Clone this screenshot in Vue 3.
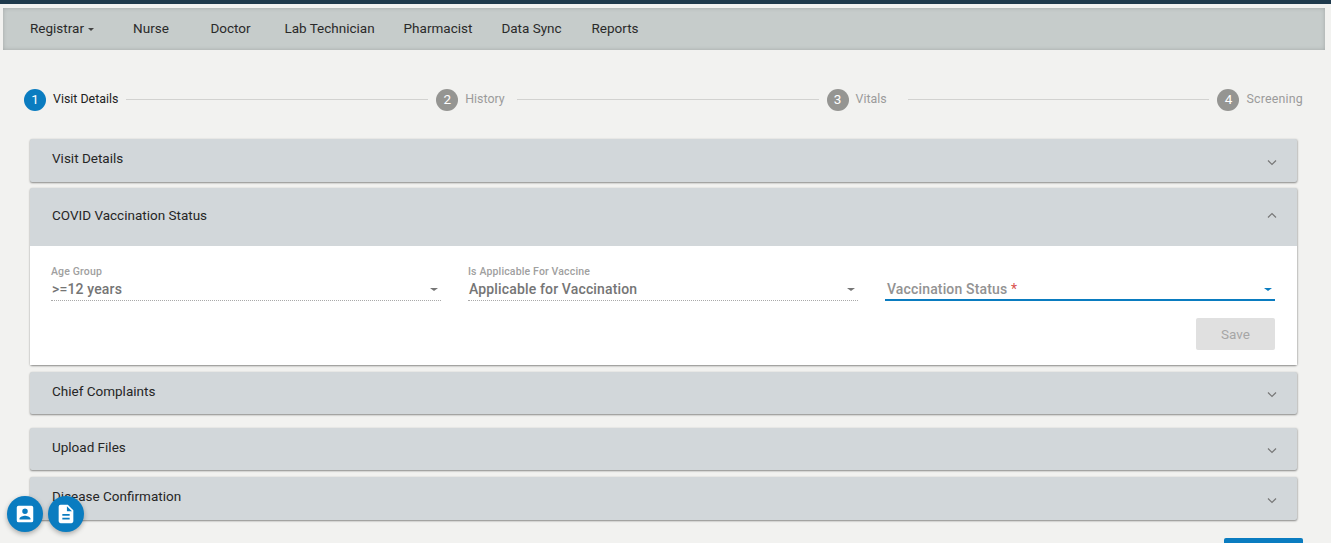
<script setup>
const navItems = [
  { label: 'Nurse', width: '77px' },
  { label: 'Doctor', width: '82px' },
  { label: 'Lab Technician', width: '116px' },
  { label: 'Pharmacist', width: '101px' },
  { label: 'Data Sync', width: '86px' },
  { label: 'Reports', width: '81px' }
]
const steps = [
  { label: 'Visit Details', gap: '8px' },
  { label: 'History', gap: '12px' },
  { label: 'Vitals', gap: '21px' },
  { label: 'Screening', gap: '0' }
]
const collapsedBottom = ['Chief Complaints', 'Upload Files', 'Disease Confirmation']
</script>

<template>
  <div class="page">
    <div class="topbar"></div>
    <nav class="nav">
      <a class="nav-item first">Registrar <i class="caret"></i></a>
      <a v-for="n in navItems" :key="n.label" class="nav-item" :style="{ width: n.width }">{{ n.label }}</a>
    </nav>

    <div class="stepper">
      <template v-for="(s, i) in steps" :key="s.label">
        <div class="step" :class="{ active: i === 0 }">
          <span class="num">{{ i + 1 }}</span>
          <span class="step-label">{{ s.label }}</span>
        </div>
        <div v-if="i < steps.length - 1" class="line" :style="{ marginLeft: s.gap }"></div>
      </template>
    </div>

    <div class="panels">
      <section class="panel p-first">
        <header class="head">
          <span>Visit Details</span>
          <svg class="chev" viewBox="0 0 10 7"><path d="M1 1.500 5 5.500l4-4" /></svg>
        </header>
      </section>

      <section class="panel open">
        <header class="head tall">
          <span>COVID Vaccination Status</span>
          <svg class="chev" viewBox="0 0 10 7"><path d="M1 5.500 5 1.500l4 4" /></svg>
        </header>
        <div class="body">
          <div class="fields">
            <div class="field disabled">
              <label>Age Group</label>
              <div class="value">&gt;=12 years</div>
              <i class="arrow"></i>
            </div>
            <div class="field disabled">
              <label>Is Applicable For Vaccine</label>
              <div class="value">Applicable for Vaccination</div>
              <i class="arrow"></i>
            </div>
            <div class="field focused">
              <label>&nbsp;</label>
              <div class="value">Vaccination Status <em>*</em></div>
              <i class="arrow"></i>
            </div>
          </div>
          <div class="actions">
            <button class="save" disabled>Save</button>
          </div>
        </div>
      </section>

      <section v-for="t in collapsedBottom" :key="t" class="panel low">
        <header class="head">
          <span>{{ t }}</span>
          <svg class="chev" viewBox="0 0 10 7"><path d="M1 1.500 5 5.500l4-4" /></svg>
        </header>
      </section>
    </div>

    <div class="bottom">
      <div class="next"></div>
    </div>

    <button class="fab fab-a" aria-label="Beneficiary">
      <svg viewBox="0 0 24 24" width="22" height="22"><path fill="#fff" d="M3 5v14a2 2 0 0 0 2 2h14a2 2 0 0 0 2-2V5a2 2 0 0 0-2-2H5a2 2 0 0 0-2 2zm12 4a3 3 0 1 1-6 0 3 3 0 0 1 6 0zm-9 8c0-2 4-3.100 6-3.100s6 1.100 6 3.100v1H6v-1z"/></svg>
    </button>
    <button class="fab fab-b" aria-label="Document">
      <svg viewBox="0 0 24 24" width="22" height="22"><path fill="#fff" d="M14 2H6a2 2 0 0 0-2 2v16a2 2 0 0 0 2 2h12a2 2 0 0 0 2-2V8l-6-6zm2 16H8v-2h8v2zm0-4H8v-2h8v2zm-3-5V3.500L18.500 9H13z"/></svg>
    </button>
  </div>
</template>

<style>
html, body { margin: 0; background: #f2f2f0; }
</style>

<style scoped>
.page {
  position: relative;
  width: 1331px;
  height: 543px;
  overflow: hidden;
  background: #f2f2f0;
  font-family: Roboto, "Liberation Sans", sans-serif;
  color: #2b2b2b;
}
.topbar { height: 4px; background: #1f3a4c; margin-bottom: 4px; }
.nav {
  display: flex;
  align-items: center;
  height: 42px;
  margin: 0 6px 0 3px;
  padding: 0 0 2px 27px;
  box-sizing: border-box;
  background: #c6cccb;
  box-shadow: inset 0 0 4px rgba(0, 0, 0, .18);
  font-size: 13.500px;
  font-weight: 450;
  color: #2a2a2a;
}
.nav-item { display: block; text-align: center; flex: none; }
.nav-item.first { width: 82.500px; text-align: left; }
.caret {
  display: inline-block;
  vertical-align: middle;
  margin-left: 1px;
  border-top: 3px solid #444;
  border-left: 3px solid transparent;
  border-right: 3px solid transparent;
}
.stepper {
  display: flex;
  align-items: center;
  height: 22px;
  margin: 39px 28px 0 24px;
  font-size: 12.400px;
}
.step { display: flex; align-items: center; flex: none; }
.num {
  width: 22px;
  height: 22px;
  padding-bottom: 2px;
  box-sizing: border-box;
  border-radius: 50%;
  background: #959592;
  color: #fff;
  display: flex;
  align-items: center;
  justify-content: center;
  margin-right: 7px;
  font-size: 13.500px;
}
.step-label { color: #9b9b9b; padding-bottom: 4px; }
.step:last-child .step-label { letter-spacing: .2px; }
.active .num { background: #0a7cc0; }
.active .step-label { color: #222; }
.line { flex: 1; height: 1px; background: #d2d2d0; margin-right: 8px; margin-bottom: 2px; }
.panels { margin: 28px 34px 0 30px; }
.panel {
  background: #d2d7da;
  box-shadow: 0 1px 2px rgba(0, 0, 0, .42), 1px 0 2px rgba(0, 0, 0, .1);
  border-radius: 2px;
}
.p-first { margin-bottom: 6px; }
.open { margin-bottom: 7px; }
.low { margin-bottom: 7px; }
.low:nth-of-type(3) { margin-bottom: 14px; }
.head {
  height: 43px;
  padding: 0 20px 4px 22px;
  box-sizing: border-box;
  display: flex;
  align-items: center;
  justify-content: space-between;
  font-size: 13.500px;
  font-weight: 450;
  color: #262626;
}
.low .head { height: 42px; }
.head.tall { height: 58px; }
.chev { width: 10px; height: 7px; fill: none; stroke: #777; stroke-width: 1.200; margin-top: 7px; }
.tall .chev { margin-top: 0; margin-bottom: 0; }
.p-first .head, .low:last-child .head { height: 43px; padding-bottom: 6px; }
.p-first .chev, .low:last-child .chev { margin-top: 9px; }
.body { background: #fff; padding: 19px 22px 15px 21px; height: 119px; box-sizing: border-box; }
.fields { display: flex; gap: 27px; }
.field { position: relative; flex: 1; height: 36px; box-sizing: border-box; }
.field label {
  display: block;
  height: 13px;
  font-size: 10.500px;
  font-weight: 500;
  letter-spacing: .15px;
  line-height: 13px;
  color: #a0a0a0;
}
.value {
  font-size: 14px;
  font-weight: 500;
  letter-spacing: .15px;
  line-height: 20px;
  color: #757575;
  padding: 1px 0 0 1px;
}
.value em { color: #d9534f; font-style: normal; font-weight: 400; }
.field.disabled { border-bottom: 1px dotted #a9a9a9; }
.field.focused { border-bottom: 2px solid #0a7cc0; height: 36px; }
.field.focused .value { color: #929292; padding-left: 2px; }
.arrow {
  position: absolute;
  right: 3px;
  top: 23px;
  border-top: 3.500px solid #757575;
  border-left: 4.500px solid transparent;
  border-right: 4.500px solid transparent;
}
.focused .arrow { border-top-color: #0a7cc0; }
.actions { display: flex; justify-content: flex-end; margin-top: 17px; }
.save {
  width: 79px;
  height: 32px;
  border: 0;
  border-radius: 2px;
  background: #e0e0e0;
  color: #a6a6a6;
  font-family: Roboto, sans-serif;
  font-size: 13.500px;
  font-weight: 400;
}
.bottom { display: flex; justify-content: flex-end; margin: 18px 28px 0 0; }
.next { width: 79px; height: 36px; background: #0a7cc0; border-radius: 2px; }
.fab {
  position: absolute;
  top: 496px;
  width: 36px;
  height: 36px;
  padding: 0;
  border: 0;
  border-radius: 50%;
  background: #0a7cc0;
  box-shadow: 0 2px 5px rgba(0, 0, 0, .3);
  display: flex;
  align-items: center;
  justify-content: center;
}
.fab-a { left: 7px; }
.fab-b { left: 48px; }
</style>
